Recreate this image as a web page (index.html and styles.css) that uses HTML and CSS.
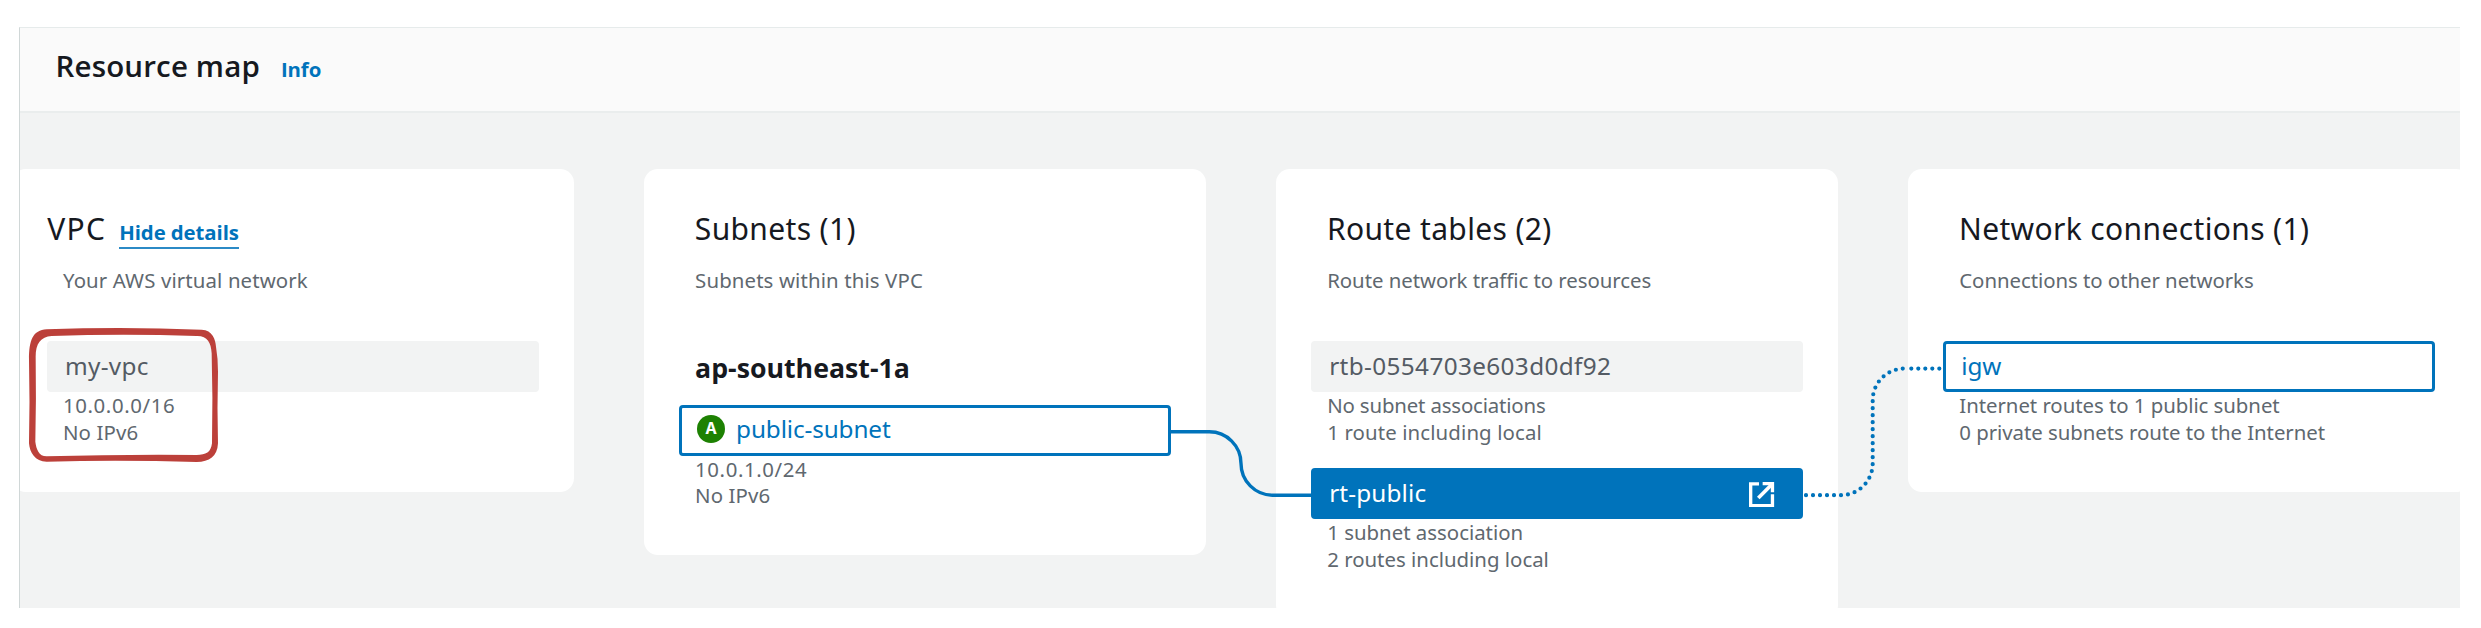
FILE: index.html
```html
<!DOCTYPE html>
<html lang="en">
<head>
<meta charset="utf-8">
<title>Resource map</title>
<link rel="stylesheet" href="styles.css">
</head>
<body>
<section class="panel">
  <header class="panel-header">
    <h1 class="panel-title">Resource map</h1>
    <a class="info-link">Info</a>
  </header>
  <div class="board">
    <article class="card card-vpc">
      <div class="card-head">
        <h2 class="card-title vpc-title">VPC</h2>
        <a class="toggle-link">Hide details</a>
      </div>
      <p class="card-sub loose">Your AWS virtual network</p>
      <div class="resource muted"><span class="name name-vpc">my-vpc</span></div>
      <ul class="details">
        <li class="cidr">10.0.0.0/16</li>
        <li class="loose">No IPv6</li>
      </ul>
    </article>

    <article class="card">
      <div class="card-head"><h2 class="card-title">Subnets (1)</h2></div>
      <p class="card-sub loose">Subnets within this VPC</p>
      <h3 class="zone">ap-southeast-1a</h3>
      <div class="resource outlined">
        <span class="badge">A</span>
        <span class="name">public-subnet</span>
      </div>
      <ul class="details">
        <li class="cidr">10.0.1.0/24</li>
        <li class="loose">No IPv6</li>
      </ul>
    </article>

    <article class="card">
      <div class="card-head"><h2 class="card-title">Route tables (2)</h2></div>
      <p class="card-sub tight-sub">Route network traffic to resources</p>
      <div class="resource muted"><span class="name name-id">rtb-0554703e603d0df92</span></div>
      <ul class="details">
        <li class="tight">No subnet associations</li>
        <li class="loose">1 route including local</li>
      </ul>
      <div class="resource active">
        <span class="name name-route">rt-public</span>
        <svg class="external" viewBox="58 66 76 76" fill="none" stroke="#fff">
          <path stroke-width="10" d="M88 71.5H63V137H128.5V103"/>
          <path stroke-width="10" d="M99 71H128.5V97"/>
          <path stroke-width="11" d="M86 114L127 73"/>
        </svg>
      </div>
      <ul class="details">
        <li>1 subnet association</li>
        <li>2 routes including local</li>
      </ul>
    </article>

    <article class="card">
      <div class="card-head"><h2 class="card-title">Network connections (1)</h2></div>
      <p class="card-sub tight-sub">Connections to other networks</p>
      <div class="resource outlined"><span class="name">igw</span></div>
      <ul class="details">
        <li class="tight-sub">Internet routes to 1 public subnet</li>
        <li class="tight-sub">0 private subnets route to the Internet</li>
      </ul>
    </article>
  </div>
</section>

<svg class="overlay" viewBox="0 0 2481 628" fill="none">
  <!-- subnet to route table -->
  <path class="link" d="M1170 431.8H1209.3A31.7 31.7 0 0 1 1241 463.5A31.7 31.7 0 0 0 1272.7 495.2H1311"/>
  <!-- route table to internet gateway -->
  <g class="link dotted">
    <path d="M1806 495.2H1841A31.7 31.7 0 0 0 1872.7 463.5V400.3A31.7 31.7 0 0 1 1903 368.6"/>
    <path d="M1911.3 368.6H1940"/>
  </g>
  <!-- hand-drawn highlight around my-vpc -->
  <path class="highlight" transform="translate(20 315) scale(.33333)" fill-rule="evenodd"
    d="M27 135C27 75 38 46 80 43Q310 35 545 44C578 46 586 72 588 95Q594 130 594 170Q591 280 594 385C592 425 568 441 530 441Q300 434 80 440C45 440 29 412 27 385Q30 260 27 135Z
       M47 125C47 86 62 65 95 63Q310 56 530 63C562 62 573 82 575 115Q579 250 576 385C573 412 558 420 530 420Q300 418 80 424C56 424 49 402 46 380Q49 250 47 125Z"/>
</svg>
</body>
</html>
```
FILE: styles.css
```css
* { box-sizing: border-box; }

body {
  margin: 0;
  height: 628px;
  padding: 27px 0 0 19px;
  overflow: hidden;
  background: #fff;
  font-family: "Noto Sans", "Open Sans", sans-serif;
  font-size: 20.4px;
  color: #60686f;
}

h1, h2, h3, p, ul { margin: 0; padding: 0; }

ul { list-style: none; }

.panel {
  display: flex;
  flex-direction: column;
  width: 2441px;
  height: 581px;
  overflow: hidden;
  border-top: 1px solid #e6ebeb;
  border-left: 1px solid #d0d7d7;
}

.panel-header {
  display: flex;
  flex: none;
  align-items: baseline;
  gap: 21px;
  height: 85px;
  padding: 18px 0 0 35.5px;
  background: #fafafa;
  border-bottom: 2px solid #eaeded;
}

.panel-title {
  font-family: "Open Sans", "Noto Sans", sans-serif;
  font-size: 29.5px;
  font-weight: 650;
  line-height: 40px;
  letter-spacing: .15px;
  color: #16191f;
}

.info-link, .toggle-link {
  font-family: "Open Sans", "Noto Sans", sans-serif;
  font-weight: 680;
  letter-spacing: -.1px;
  color: #0073bb;
}

.board {
  display: flex;
  flex: 1;
  align-items: flex-start;
  gap: 70.3px;
  padding-top: 56px;
  margin-left: -8.3px;
  background: #f2f3f3;
}

.card {
  flex: none;
  width: 561.8px;
  padding: 38px 35px 46.7px;
  border-radius: 14px;
  background: #fff;
}

.card-head {
  display: flex;
  align-items: baseline;
  gap: 13px;
  height: 44px;
  padding-left: 16px;
}

.card-vpc .card-head { padding-left: .5px; }

.card-title {
  font-size: 30px;
  font-weight: 400;
  line-height: 44px;
  letter-spacing: .36px;
  color: #16191f;
}

.vpc-title { letter-spacing: 1.3px; }

.toggle-link {
  line-height: 29px;
  border-bottom: 2px solid #2b8ac6;
}

.card-sub {
  margin: 15px 0 47.3px;
  padding-left: 16.3px;
  line-height: 28px;
}

.zone {
  margin: 8.5px 0 19px;
  padding-left: 16.3px;
  font-family: "Open Sans", "Noto Sans", sans-serif;
  font-size: 26.7px;
  font-weight: 700;
  line-height: 36px;
  color: #16191f;
}

.card-sub:has(+ .zone) { margin-bottom: 0; }
.card-sub + .zone { margin-top: 55.8px; }

.resource {
  display: flex;
  align-items: center;
  height: 51px;
  padding: 0 15px 2px 16.3px;
  border: 2px solid transparent;
  border-radius: 4px;
  font-size: 24.3px;
  line-height: 34px;
}

.muted {
  background: #f2f3f3;
  border-color: #f2f3f3;
  color: #545b64;
}

.outlined {
  padding-left: 15.3px;
  border: 3px solid #0073bb;
  color: #0073bb;
}

.outlined .name { letter-spacing: -.12px; }

.active {
  margin-top: 23px;
  background: #0073bb;
  border-color: #0073bb;
  color: #fff;
}

.name-vpc { letter-spacing: .3px; }
.name-id { letter-spacing: .38px; }
.name-route { letter-spacing: .15px; }

.badge {
  width: 28px;
  height: 28px;
  margin: 0 11px 0 0;
  border-radius: 50%;
  background: #1d8102;
  color: #fff;
  font-size: 16px;
  font-weight: 700;
  line-height: 27px;
  text-align: center;
}

.external {
  width: 25.3px;
  height: 25.3px;
  margin: 3px 11px 0 auto;
}

.details {
  padding-left: 16.3px;
  line-height: 26.5px;
}

.loose { letter-spacing: .12px; }
.tight { letter-spacing: -.16px; }
.tight-sub { letter-spacing: -.05px; }
.cidr { letter-spacing: .6px; }

.overlay {
  position: absolute;
  top: 0;
  left: 0;
  width: 2481px;
  height: 628px;
  pointer-events: none;
}

.link { stroke: #0073bb; stroke-width: 3.4; }

.dotted {
  stroke-width: 4.2;
  stroke-linecap: round;
  stroke-dasharray: 0 7;
}

.highlight { fill: #bc403a; }
```
